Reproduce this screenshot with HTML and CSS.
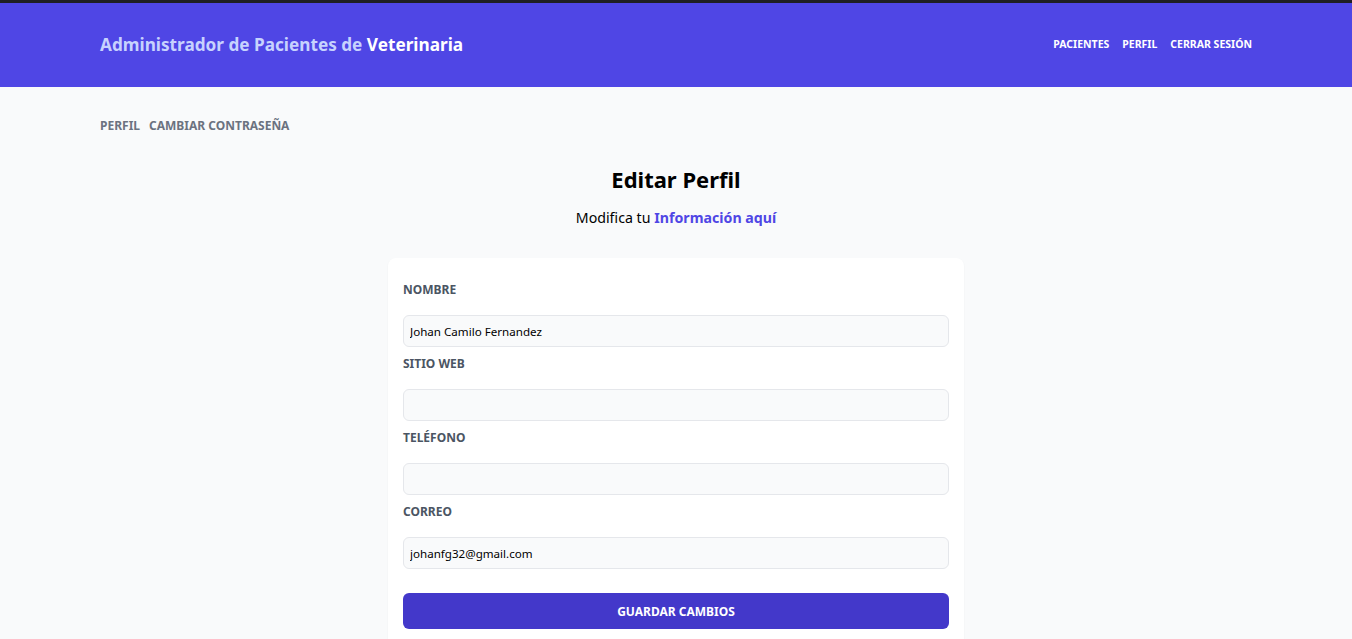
FILE: index.html
```html
<!DOCTYPE html>
<html lang="es">
<head>
<meta charset="utf-8">
<title>Editar Perfil</title>
<link rel="stylesheet" href="styles.css">
</head>
<body>
<div class="topline"></div>
<header class="header">
  <div class="header-inner">
    <h2 class="brand">Administrador de Pacientes de <span class="brand-strong">Veterinaria</span></h2>
    <nav class="nav">
      <a href="#" class="nav-link">Pacientes</a>
      <a href="#" class="nav-link">Perfil</a>
      <button class="nav-link nav-btn">Cerrar Sesión</button>
    </nav>
  </div>
</header>
<main class="main">
  <nav class="subnav">
    <a href="#" class="subnav-link">Perfil</a>
    <a href="#" class="subnav-link">Cambiar Contraseña</a>
  </nav>
  <h1 class="title">Editar Perfil</h1>
  <p class="subtitle">Modifica tu <span class="subtitle-strong">Información aquí</span></p>
  <form class="card">
    <div class="field">
      <label class="label">Nombre</label>
      <input class="input" type="text" value="Johan Camilo Fernandez">
    </div>
    <div class="field">
      <label class="label">Sitio Web</label>
      <input class="input" type="text" value="">
    </div>
    <div class="field">
      <label class="label">Teléfono</label>
      <input class="input" type="text" value="">
    </div>
    <div class="field">
      <label class="label">Correo</label>
      <input class="input" type="email" value="johanfg32@gmail.com">
    </div>
    <button type="button" class="submit">Guardar Cambios</button>
  </form>
</main>
</body>
</html>
```
FILE: styles.css
```css
* { box-sizing: border-box; }
html, body { margin: 0; padding: 0; }
body {
  background: #f9fafb;
  font-family: "Noto Sans", "Open Sans", sans-serif;
  color: #000;
  height: 639px;
  overflow: hidden;
}
.topline { height: 3px; background: #1f1f23; }
.header { background: #4f46e5; height: 84px; }
.header-inner {
  height: 100%;
  padding: 0 100px;
  display: flex;
  align-items: center;
  justify-content: space-between;
}
.brand {
  margin: 0;
  font-size: 17.2px;
  font-weight: 700;
  color: #c7d2fe;
  line-height: 24px;
}
.brand-strong { color: #fff; }
.nav { display: flex; gap: 13px; align-items: center; padding-bottom: 2px; }
.nav-link {
  color: #fff;
  font-size: 10.5px;
  font-weight: 700;
  text-transform: uppercase;
  text-decoration: none;
  line-height: 16px;
}
.nav-btn {
  background: none;
  border: 0;
  padding: 0;
  font-family: inherit;
  cursor: pointer;
}
.main { padding: 30px 100px 0; }
.subnav { display: flex; gap: 9px; }
.subnav-link {
  color: #6b7280;
  font-size: 12px;
  font-weight: 700;
  text-transform: uppercase;
  text-decoration: none;
  line-height: 18px;
}
.title {
  margin: 30px 0 0;
  text-align: center;
  font-size: 22px;
  font-weight: 700;
  line-height: 28px;
}
.subtitle {
  margin: 15px 0 0;
  text-align: center;
  font-size: 14.2px;
  line-height: 20px;
}
.subtitle-strong { color: #4f46e5; font-weight: 700; }
.card {
  margin: 30px auto 0;
  width: 576px;
  background: #fff;
  border-radius: 8px;
  box-shadow: 0 1px 2px rgba(0,0,0,0.05);
  padding: 24px 15px 20px;
}
.field { display: flex; flex-direction: column; margin-bottom: 9px; }
.label {
  color: #4b5563;
  font-size: 12px;
  font-weight: 700;
  text-transform: uppercase;
  line-height: 16px;
  margin-bottom: 17px;
}
.input {
  height: 32px;
  width: 100%;
  border: 1px solid #e5e7eb;
  background: #f9fafb;
  border-radius: 6px;
  padding: 0 6px;
  font-family: inherit;
  font-size: 11.6px;
  color: #000;
}
.submit {
  display: block;
  width: 100%;
  height: 36px;
  margin-top: 24px;
  border: 0;
  border-radius: 6px;
  background: #4338ca;
  color: #fff;
  font-family: inherit;
  font-size: 12px;
  font-weight: 700;
  text-transform: uppercase;
}
```
